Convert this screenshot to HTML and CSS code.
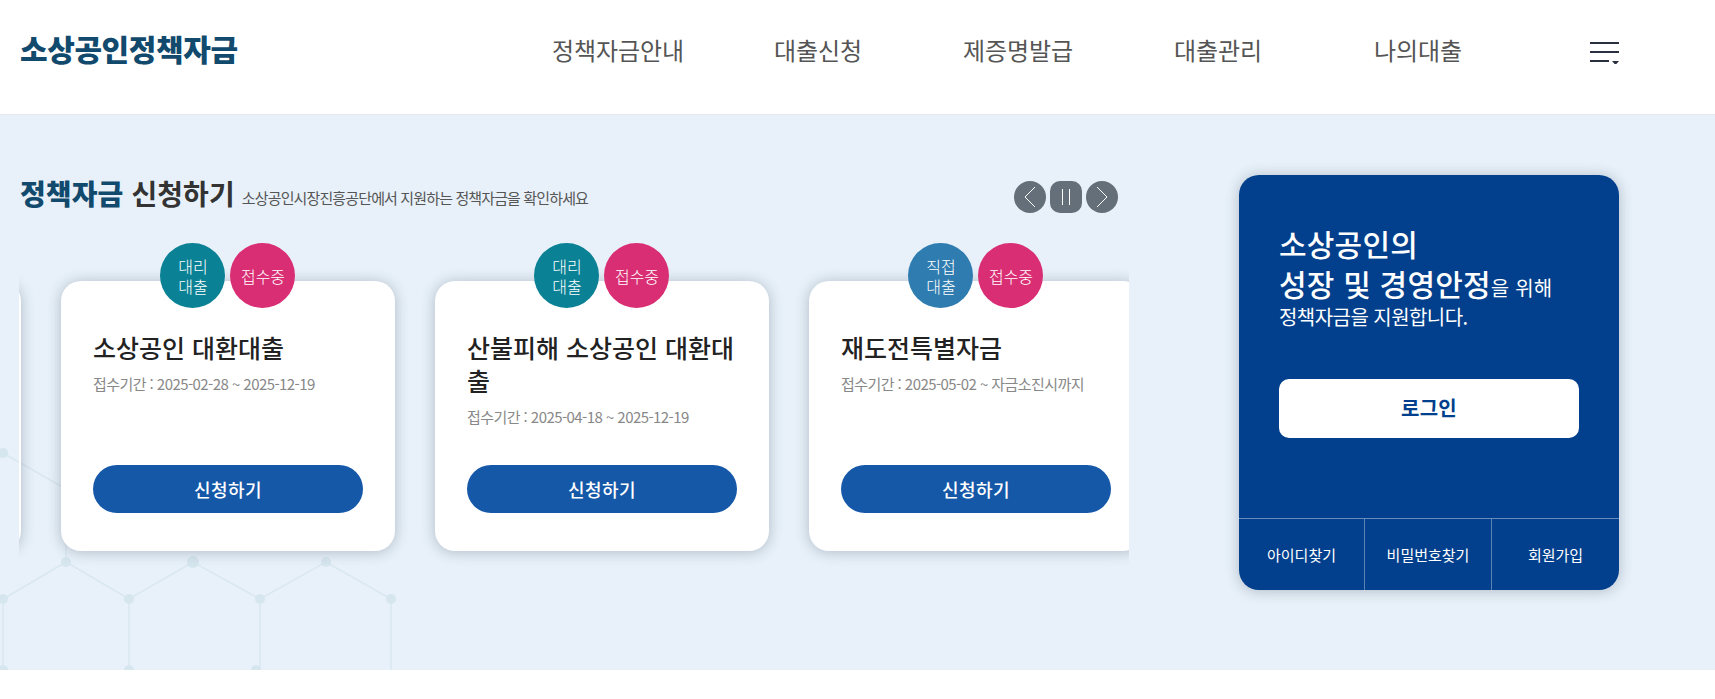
FILE: index.html
```html
<!DOCTYPE html>
<html lang="ko">
<head>
<meta charset="utf-8">
<title>소상공인정책자금</title>
<link rel="stylesheet" href="styles.css">
</head>
<body>
<header class="site-header">
  <a class="logo">소상공인정책자금</a>
  <nav class="gnb">
    <a>정책자금안내</a>
    <a>대출신청</a>
    <a>제증명발급</a>
    <a>대출관리</a>
    <a>나의대출</a>
  </nav>
  <button class="menu-btn" aria-label="전체메뉴">
    <svg width="29" height="24" viewBox="0 0 29 24"><path d="M0 3h29M0 12h29M0 21h19" stroke="#2b3040" stroke-width="2" fill="none"/><path d="M22 21h7l-3.5 4z" fill="#2b3040"/></svg>
  </button>
</header>
<main class="visual">
  <svg class="hex-bg" width="400" height="235" viewBox="0 0 400 235">
    <g stroke="#d9e7f1" stroke-width="1.5" fill="none">
      <path d="M3 18L66 54M66 127L3 164V235M66 127L129 164L193 127L260 164L326 127L391 164V235M129 164V235M260 164V235M66 54V127"/>
    </g>
    <g fill="#d6e6ef">
      <circle cx="3" cy="18" r="5"/><circle cx="66" cy="127" r="5"/><circle cx="193" cy="127" r="6"/><circle cx="326" cy="127" r="5"/>
      <circle cx="3" cy="164" r="5"/><circle cx="129" cy="164" r="5"/><circle cx="260" cy="164" r="5"/><circle cx="391" cy="164" r="5"/>
      <circle cx="3" cy="235" r="5"/><circle cx="129" cy="235" r="5"/><circle cx="256" cy="235" r="5"/>
    </g>
  </svg>
  <section class="fund">
    <div class="fund-head">
      <h2 class="fund-title"><strong>정책자금</strong> 신청하기</h2>
      <p class="fund-sub">소상공인시장진흥공단에서 지원하는 정책자금을 확인하세요</p>
      <div class="controls">
        <button class="ctl round" aria-label="이전"><svg width="12" height="22" viewBox="0 0 12 22"><path d="M11 1L1 11l10 10" stroke="#fff" fill="none"/></svg></button>
        <button class="ctl" aria-label="정지"><svg width="12" height="16" viewBox="0 0 12 16"><path d="M2.5 0v16M9.5 0v16" stroke="#fff" fill="none"/></svg></button>
        <button class="ctl round" aria-label="다음"><svg width="12" height="22" viewBox="0 0 12 22"><path d="M1 1l10 10L1 21" stroke="#fff" fill="none"/></svg></button>
      </div>
    </div>
    <div class="carousel">
      <div class="track">
        <article class="card"></article>
        <article class="card">
          <div class="badges"><span class="badge teal">대리<br>대출</span><span class="badge pink">접수중</span></div>
          <h3 class="card-title">소상공인 대환대출</h3>
          <p class="card-date">접수기간 : 2025-02-28 ~ 2025-12-19</p>
          <a class="apply">신청하기</a>
        </article>
        <article class="card">
          <div class="badges"><span class="badge teal">대리<br>대출</span><span class="badge pink">접수중</span></div>
          <h3 class="card-title">산불피해 소상공인 대환대출</h3>
          <p class="card-date">접수기간 : 2025-04-18 ~ 2025-12-19</p>
          <a class="apply">신청하기</a>
        </article>
        <article class="card">
          <div class="badges"><span class="badge blue">직접<br>대출</span><span class="badge pink">접수중</span></div>
          <h3 class="card-title">재도전특별자금</h3>
          <p class="card-date">접수기간 : 2025-05-02 ~ 자금소진시까지</p>
          <a class="apply">신청하기</a>
        </article>
      </div>
    </div>
  </section>
  <aside class="login">
    <div class="login-body">
      <p class="login-text"><b>소상공인의<br>성장 및 경영안정</b><span class="login-rest">을 위해</span><br>정책자금을 지원합니다.</p>
      <a class="login-btn">로그인</a>
    </div>
    <div class="login-links">
      <a>아이디찾기</a>
      <a>비밀번호찾기</a>
      <a>회원가입</a>
    </div>
  </aside>
</main>
</body>
</html>
```
FILE: styles.css
```css
* { box-sizing: border-box; }
html, body { margin: 0; padding: 0; background: #fff; }
body { font-family: "Noto Sans CJK KR", "Noto Sans", sans-serif; color: #222; overflow: hidden; }
h2, h3, p { margin: 0; }
button { border: 0; padding: 0; font: inherit; }

.site-header { display: flex; align-items: center; height: 115px; padding: 0 96px 16px 20px; border-bottom: 1px solid #e4e8ec; background: #fff; }
.logo { width: 498px; margin-bottom: 2px; font-size: 30px; font-weight: 900; letter-spacing: -0.4px; color: #124a6e; }
.gnb { display: flex; width: 1000px; margin-right: 72px; }
.gnb a { flex: 0 0 200px; text-align: center; font-size: 24px; letter-spacing: -0.1px; color: #555; }
.menu-btn { display: flex; width: 29px; height: 24px; margin-top: 6px; background: none; }

.visual { position: relative; display: flex; align-items: flex-start; height: 555px; padding: 60px 96px 0 19px; background: #e8f1f9; }
.hex-bg { position: absolute; left: 0; bottom: 0; }

.fund { position: relative; width: 1110px; margin-right: 110px; }
.fund-head { display: flex; align-items: center; height: 32px; margin-top: 6px; padding-left: 1px; }
.fund-title { margin-bottom: 8px; font-size: 28px; font-weight: 700; letter-spacing: 0.1px; color: #333; white-space: nowrap; }
.fund-title strong { color: #124a6e; }
.fund-sub { margin-left: 7px; font-size: 15px; letter-spacing: -0.87px; color: #555; }
.controls { display: flex; gap: 4px; margin-left: auto; margin-right: 11px; }
.ctl { display: flex; align-items: center; justify-content: center; width: 32px; height: 32px; border-radius: 10px; background: #646f79; }
.ctl.round { border-radius: 50%; }

.carousel { overflow: hidden; margin-top: 12px; padding: 56px 0 30px; }
.track { display: flex; gap: 40px; margin-left: -332px; }
.card { position: relative; display: flex; flex: 0 0 334px; flex-direction: column; height: 270px; padding: 50px 32px 38px; border-radius: 20px; background: #fff; box-shadow: 0 1px 14px rgba(40, 60, 85, .3); }
.badges { position: absolute; top: -38px; left: 99px; display: flex; gap: 5px; }
.badge { display: flex; align-items: center; justify-content: center; width: 65px; height: 65px; padding-left: 1px; border-radius: 50%; font-size: 16px; font-weight: 300; line-height: 20px; text-align: center; color: #fff; }
.teal { background: #0a8195; }
.pink { background: #d92e74; }
.blue { background: #2f7cb0; }
.card-title { font-size: 25px; font-weight: 500; line-height: 33px; color: #222; }
.card-date { margin-top: 9px; font-size: 15px; line-height: 22px; letter-spacing: -0.56px; color: #888; white-space: nowrap; }
.apply { display: block; height: 48px; margin-top: auto; border-radius: 24px; background: #1558a8; font-size: 18px; font-weight: 500; line-height: 48px; letter-spacing: 0.4px; text-align: center; color: #fff; }

.login { position: relative; flex: 0 0 380px; display: flex; flex-direction: column; height: 415px; border-radius: 20px; background: #023f8c; box-shadow: 0 1px 14px rgba(40, 60, 85, .3); color: #fff; }
.login-body { flex: 1; padding: 48px 40px 0 40px; }
.login-text { height: 156px; font-size: 20px; line-height: 28px; letter-spacing: -0.55px; color: #fff; }
.login-text b { font-size: 30px; font-weight: 500; line-height: 40px; letter-spacing: 0.2px; }
.login-rest { letter-spacing: 0.2px; }
.login-btn { display: block; height: 59px; border-radius: 10px; background: #fff; font-size: 20px; font-weight: 700; line-height: 57px; letter-spacing: 0.3px; text-align: center; color: #023f8c; }
.login-links { display: grid; grid-template-columns: 125px 127px 1fr; height: 72px; border-top: 1px solid rgba(255, 255, 255, .4); }
.login-links a { display: flex; align-items: center; justify-content: center; font-size: 15px; color: #fff; }
.login-links a + a { border-left: 1px solid rgba(255, 255, 255, .35); }
```
